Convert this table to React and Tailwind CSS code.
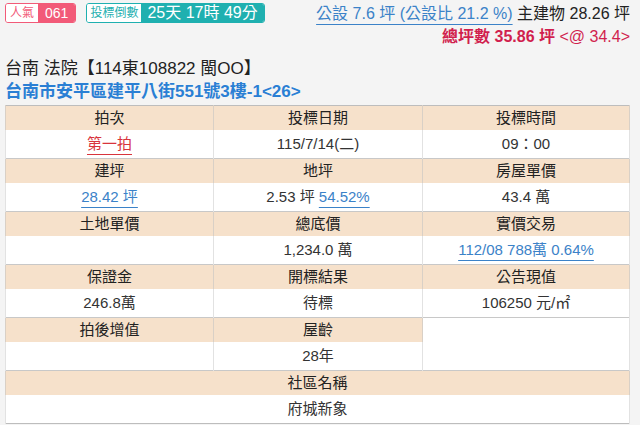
import React from 'react';

const font = { fontFamily: '"Liberation Sans", "Noto Sans CJK TC", sans-serif' };

const Head = ({ children, className = '', colSpan }) => (
    <td colSpan={colSpan} className={`h-[24px] bg-[#f6e1cb] text-center text-[#222] border-x border-[#d9d0c6] p-0 leading-none ${className}`}>
        {children}
    </td>
);

const Cell = ({ children, className = '', colSpan }) => (
    <td colSpan={colSpan} className={`h-[29px] bg-white text-center text-[#333] border-x border-[#e2e2e2] p-0 leading-none ${className}`}>
        {children}
    </td>
);

const Link = ({ children, className = 'text-[#3b82c8] decoration-[#3b82c8]' }) => (
    <span className={`underline underline-offset-[5px] ${className}`}>{children}</span>
);

const App = () => {
    return (
        <div className="w-[640px] h-[425px] overflow-hidden bg-[#f4f4f4]" style={font}>
            {/* Top bar */}
            <div className="flex items-start justify-between pl-[5px] pr-[10px] pt-[3px]">
                <div className="flex items-center gap-[10px]">
                    <div className="flex h-[20px] rounded-[3px] overflow-hidden border border-[#f25a78]">
                        <span className="bg-white text-[#f25a78] text-[12px] px-[4px] flex items-center">人氣</span>
                        <span className="bg-[#f25a78] text-white text-[14px] px-[7px] flex items-center">061</span>
                    </div>
                    <div className="flex h-[20px] rounded-[3px] overflow-hidden border border-[#1fb0b0]">
                        <span className="bg-white text-[#1fb0b0] text-[12px] px-[3px] flex items-center">投標倒數</span>
                        <span className="bg-[#1fb0b0] text-white text-[16px] px-[6px] flex items-center">25天 17時 49分</span>
                    </div>
                </div>
                <div className="flex flex-col items-end text-[16px] leading-none">
                    <div className="pt-[3px]">
                        <Link>公設 7.6 坪 (公設比 21.2 %)</Link>
                        <span className="text-[#222]"> 主建物 28.26 坪</span>
                    </div>
                    <div className="mt-[7px] text-[#d11f4e]">
                        <span className="font-bold">總坪數 35.86 坪</span> &lt;@ 34.4&gt;
                    </div>
                </div>
            </div>

            {/* Case title */}
            <div className="pl-[5px] mt-[12px] text-[17px] leading-[24px] text-[#222]">台南 法院【114東108822 閩OO】</div>
            <div className="pl-[5px] text-[17px] leading-[22px] font-bold text-[#2a7fd4]">台南市安平區建平八街551號3樓-1&lt;26&gt;</div>

            {/* Detail table */}
            <table className="ml-[5px] mt-[2px] w-[624px] table-fixed border-collapse border border-[#bdbdbd] text-[15px]">
                <colgroup>
                    <col className="w-[208px]" />
                    <col className="w-[209px]" />
                    <col className="w-[207px]" />
                </colgroup>
                <tbody>
                    <tr><Head>拍次</Head><Head>投標日期</Head><Head>投標時間</Head></tr>
                    <tr className="border-b border-[#c8c8c8]">
                        <Cell><Link className="text-[#d8343c] decoration-[#d8343c]">第一拍</Link></Cell>
                        <Cell>115/7/14(二)</Cell>
                        <Cell>09：00</Cell>
                    </tr>
                    <tr><Head>建坪</Head><Head>地坪</Head><Head>房屋單價</Head></tr>
                    <tr className="border-b border-[#c8c8c8]">
                        <Cell><Link>28.42 坪</Link></Cell>
                        <Cell>2.53 坪 <Link>54.52%</Link></Cell>
                        <Cell>43.4 萬</Cell>
                    </tr>
                    <tr><Head>土地單價</Head><Head>總底價</Head><Head>實價交易</Head></tr>
                    <tr className="border-b border-[#c8c8c8]">
                        <Cell></Cell>
                        <Cell>1,234.0 萬</Cell>
                        <Cell><Link>112/08 788萬 0.64%</Link></Cell>
                    </tr>
                    <tr><Head>保證金</Head><Head>開標結果</Head><Head>公告現值</Head></tr>
                    <tr className="border-b border-[#c8c8c8]">
                        <Cell>246.8萬</Cell>
                        <Cell>待標</Cell>
                        <Cell>106250 元/㎡</Cell>
                    </tr>
                    <tr>
                        <Head>拍後增值</Head>
                        <Head>屋齡</Head>
                        <td rowSpan={2} className="bg-white border-x border-[#e2e2e2] p-0"></td>
                    </tr>
                    <tr className="border-b border-[#c8c8c8]">
                        <Cell></Cell>
                        <Cell>28年</Cell>
                    </tr>
                    <tr><Head colSpan={3}>社區名稱</Head></tr>
                    <tr><Cell colSpan={3}>府城新象</Cell></tr>
                </tbody>
            </table>
        </div>
    );
};

export default App;
